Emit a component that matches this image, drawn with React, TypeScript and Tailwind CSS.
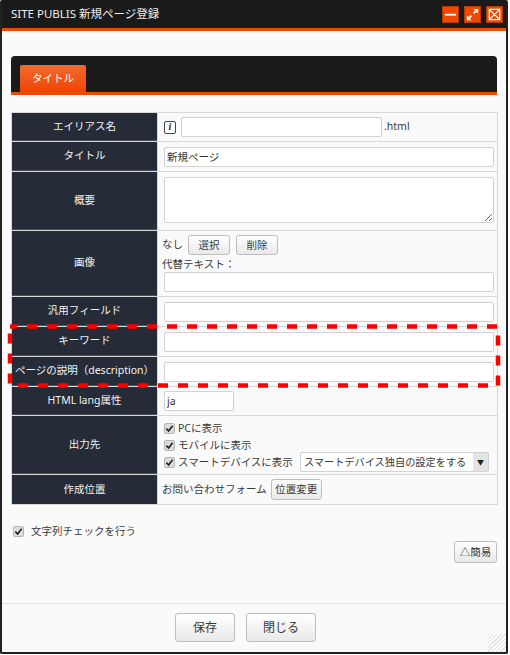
import type { ReactNode } from 'react'

const FONT = '"Noto Sans", "Noto Sans CJK JP", sans-serif'

const inputCls = 'block h-[20px] rounded-[2px] border border-[#d2d2d2] bg-white px-[2px] text-[10.5px] leading-none text-[#333] outline-none'
const btnCls = 'rounded-[3px] border border-[#bdbdbd] bg-gradient-to-b from-white to-[#e9e9e9] text-[#3a3a3a] leading-none'

function Row({ label, h, children }: { label: string; h: string; children: ReactNode }) {
  return (
    <div className={`grid grid-cols-[145px_340px] border-b border-[#d8d8d8] ${h}`}>
      <div className="flex items-center justify-center whitespace-nowrap border-b border-[#4a4f58] bg-[#252b37] text-[10.5px] text-[#f2f2f2]">{label}</div>
      <div className="min-w-0 border-l border-[#d8d8d8] pl-[6px]">{children}</div>
    </div>
  )
}

function Check() {
  return (
    <span className="flex h-[11px] w-[11px] shrink-0 items-center justify-center rounded-[2px] border border-[#b5b5b5] bg-[#dcdcdc]">
      <svg viewBox="0 0 10 10" className="h-[9px] w-[9px]">
        <path d="M1.5 5.2 L4 7.8 L8.5 2" fill="none" stroke="#222" strokeWidth="1.8" />
      </svg>
    </span>
  )
}

export default function App() {
  return (
    <div className="relative h-[655px] w-[510px] overflow-hidden bg-white" style={{ fontFamily: FONT }}>
      <div className="flex h-[654px] w-[508px] flex-col overflow-hidden rounded-[2px] border-x-2 border-b-2 border-[#222] bg-[#fafafa]">
        {/* title bar */}
        <div className="flex h-[31px] shrink-0 items-center justify-between border-b-[3px] border-[#f04a00] bg-[#1a1a1a] pl-[9px] pr-[3px]">
          <span className="text-[11.5px] text-[#eeeeee]">SITE PUBLIS 新規ページ登録</span>
          <div className="flex gap-[5px]">
            <WinButton>
              <path d="M2 7.2 H14 V9.2 H2 Z" fill="#fff" />
            </WinButton>
            <WinButton>
              <path d="M9 2 H14 V7 L12.2 5.3 L10 7.5 L8.5 6 L10.7 3.8 Z M7 14 H2 V9 L3.8 10.7 L6 8.5 L7.5 10 L5.3 12.2 Z" fill="#fff" />
            </WinButton>
            <WinButton>
              <path d="M2.5 2.5 H13.5 V13.5 H2.5 Z M2.5 2.5 L13.5 13.5 M13.5 2.5 L2.5 13.5" fill="none" stroke="#fff" strokeWidth="1.4" />
            </WinButton>
          </div>
        </div>

        <div className="flex-1 px-[9px] pt-[25px]">
          {/* tab bar */}
          <div className="h-[39px] rounded-t-[4px] border-b-[3px] border-[#f04a00] bg-[#1a1a1a] pl-[9px] pt-[9px]">
            <div className="flex h-[27px] w-[66px] items-center justify-center rounded-t-[2px] bg-gradient-to-b from-[#f26a2a] to-[#ee4400] text-[10.5px] text-white">タイトル</div>
          </div>

          {/* form table */}
          <div className="mt-[17px] w-[487px] border border-[#d8d8d8] bg-[#fafafa]">
            <Row label="エイリアス名" h="h-[29px]">
              <div className="flex h-full items-center">
                <span className="flex h-[13px] w-[12px] items-center justify-center rounded-[2px] border border-[#444] bg-white text-[10px] font-bold italic leading-none text-[#222]" style={{ fontFamily: '"Liberation Serif", serif' }}>i</span>
                <input className={`${inputCls} ml-[5px] w-[201px]`} readOnly />
                <span className="ml-[2px] text-[10.5px] text-[#3a3a3a]">.html</span>
              </div>
            </Row>
            <Row label="タイトル" h="h-[30px]">
              <div className="flex h-full items-center">
                <input className={`${inputCls} w-[330px]`} readOnly value="新規ページ" />
              </div>
            </Row>
            <Row label="概要" h="h-[59px]">
              <div className="pt-[5px]">
                <textarea className="block h-[46px] w-[330px] rounded-[2px] border border-[#d2d2d2] bg-white" readOnly />
              </div>
            </Row>
            <Row label="画像" h="h-[66px]">
              <div className="-ml-[2px] flex items-center pt-[4px] text-[10.5px] text-[#3a3a3a]">
                なし
                <button className={`${btnCls} ml-[5px] h-[20px] w-[42px] text-[10.5px]`}>選択</button>
                <button className={`${btnCls} ml-[6px] h-[20px] w-[42px] text-[10.5px]`}>削除</button>
              </div>
              <div className="-ml-[2px] mt-[2px] text-[10.5px] leading-[14px] text-[#3a3a3a]">代替テキスト：</div>
              <input className={`${inputCls} mt-[1px] w-[330px]`} readOnly />
            </Row>
            <Row label="汎用フィールド" h="h-[30px]">
              <div className="flex h-full items-center">
                <input className={`${inputCls} w-[330px]`} readOnly />
              </div>
            </Row>
            <Row label="キーワード" h="h-[30px]">
              <div className="flex h-full items-center">
                <input className={`${inputCls} w-[330px]`} readOnly />
              </div>
            </Row>
            <Row label="ページの説明（description）" h="h-[30px]">
              <div className="flex h-full items-center">
                <input className={`${inputCls} w-[330px]`} readOnly />
              </div>
            </Row>
            <Row label="HTML lang属性" h="h-[29px]">
              <div className="flex h-full items-center">
                <input className={`${inputCls} w-[70px]`} readOnly value="ja" />
              </div>
            </Row>
            <Row label="出力先" h="h-[59px]">
              <div className="flex h-full flex-col justify-center text-[10.5px] leading-[17px] text-[#3a3a3a]">
                <div className="flex h-[17px] items-center gap-[3px]"><Check />PCに表示</div>
                <div className="flex h-[17px] items-center gap-[3px]"><Check />モバイルに表示</div>
                <div className="flex h-[17px] items-center gap-[3px]">
                  <Check />スマートデバイスに表示
                  <div className="ml-[4px] flex h-[20px] w-[189px] shrink-0 items-center rounded-[2px] border border-[#d2d2d2] bg-white pl-[3px]">
                    <span className="flex-1 whitespace-nowrap text-[10.2px]">スマートデバイス独自の設定をする</span>
                    <span className="flex h-full w-[15px] items-center justify-center bg-[#e4e4e4] text-[7px] text-[#222]">▼</span>
                  </div>
                </div>
              </div>
            </Row>
            <div className="grid h-[29px] grid-cols-[145px_340px]">
              <div className="flex items-center justify-center bg-[#252b37] text-[10.5px] text-[#f2f2f2]">作成位置</div>
              <div className="flex items-center border-l border-[#d8d8d8] pl-[4px] text-[10.5px] text-[#3a3a3a]">
                お問い合わせフォーム
                <button className={`${btnCls} ml-[4px] h-[21px] w-[51px] text-[10.5px]`}>位置変更</button>
              </div>
            </div>
          </div>

          {/* string check */}
          <div className="ml-[2px] mt-[19px] flex items-center gap-[7px] text-[10.5px] leading-[14px] text-[#3a3a3a]">
            <Check />文字列チェックを行う
          </div>
          <div className="mt-[3px] flex justify-end">
            <button className={`${btnCls} h-[22px] w-[43px] text-[10.5px]`}>△簡易</button>
          </div>
        </div>

        {/* footer */}
        <div className="relative flex h-[49px] shrink-0 justify-center gap-[11px] border-t border-[#e3e3e3] pr-[17px] pt-[9px]">
          <button className={`${btnCls} h-[29px] w-[60px] text-[12px]`}>保存</button>
          <button className={`${btnCls} h-[29px] w-[70px] text-[12px]`}>閉じる</button>
          <div className="absolute bottom-0 right-0 h-[18px] w-[18px] bg-[repeating-linear-gradient(135deg,#e2e2e2_0,#e2e2e2_1px,transparent_1px,transparent_3px)]" />
        </div>
      </div>

      {/* red dashed highlight */}
      <svg className="absolute left-0 top-0" width="510" height="655">
        <rect x="10" y="326.5" width="488" height="59" fill="none" stroke="#ff0000" strokeWidth="4.5" strokeDasharray="10 10" strokeDashoffset="3" />
      </svg>
    </div>
  )
}

function WinButton({ children }: { children: ReactNode }) {
  return (
    <span className="flex h-[17px] w-[17px] items-center justify-center border border-[#b83800] bg-[#f04a00]">
      <svg viewBox="0 0 16 16" className="h-[15px] w-[15px]">{children}</svg>
    </span>
  )
}
